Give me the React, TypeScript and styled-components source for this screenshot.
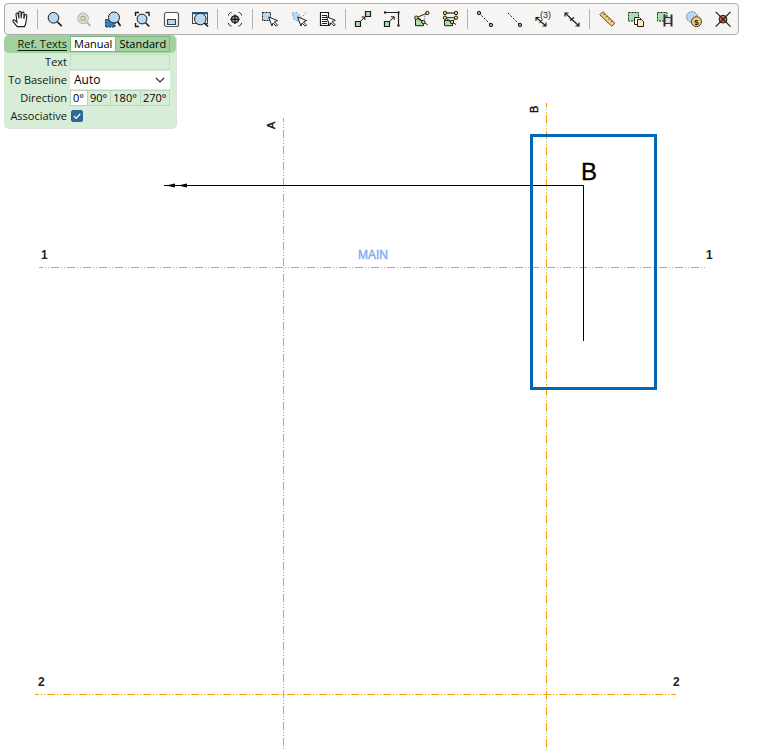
import React, { useState } from "react";
import styled, { createGlobalStyle } from "styled-components";

const GlobalStyle = createGlobalStyle`
  body {
    margin: 0;
    background: #fff;
  }
`;

const Page = styled.main`
  position: relative;
  display: flex;
  flex-direction: column;
  align-items: flex-start;
  min-height: 100vh;
  box-sizing: border-box;
  padding: 3px 4px 0;
  font-family: "Open Sans", "Noto Sans", sans-serif;
  font-size: 11px;
  color: #000;
`;

const Drawing = styled.svg`
  position: absolute;
  inset: 0;
  width: 100%;
  height: 100%;
  font-family: "Liberation Sans", Arial, sans-serif;
`;

const Toolbar = styled.div`
  position: relative;
  display: flex;
  align-items: center;
  padding-right: 1px;
  border: 1px solid #acacac;
  border-radius: 4px;
  background: #f6f5f4;
`;

const ToolButton = styled.button`
  display: flex;
  align-items: center;
  justify-content: center;
  width: 29px;
  height: 30px;
  padding: 0;
  border: 0;
  background: none;
  &:hover {
    background: #e4e9ee;
  }
`;

const Separator = styled.span`
  width: 1px;
  height: 20px;
  margin: 0 2px 0 3px;
  background: #b4b4b4;
`;

const Panel = styled.form`
  position: relative;
  display: flex;
  flex-direction: column;
  box-sizing: border-box;
  width: 173px;
  padding-bottom: 3px;
  border-radius: 5px;
  border-right: 1px solid #dde3dd;
  border-bottom: 1px solid #dde3dd;
  background: #d8edd8;
`;

const Row = styled.div<{ $header?: boolean }>`
  display: grid;
  grid-template-columns: 63px 100px;
  column-gap: 3px;
  align-items: center;
  height: 18px;
  border-radius: 5px;
  background: ${(p) => (p.$header ? "#a0d19f" : "transparent")};
`;

const Label = styled.label<{ $underlined?: boolean }>`
  text-align: right;
  line-height: 16px;
  white-space: nowrap;
  color: #10200f;
  text-decoration: ${(p) => (p.$underlined ? "underline" : "none")};
  text-underline-offset: 2px;
`;

const Options = styled.div`
  display: flex;
`;

const Option = styled.button<{ $active: boolean; $strong?: boolean }>`
  height: 16px;
  padding: ${(p) => (p.$strong ? "0 3px" : "0 3px 0 2px")};
  border: 1px solid ${(p) => (p.$strong ? "#7dbb7c" : "#b9d8b9")};
  border-left-width: ${(p) => (p.$active ? 1 : 0)}px;
  background: ${(p) => (p.$active ? "#fff" : "transparent")};
  font: inherit;
  line-height: 14px;
  color: #000;
`;

const TextBox = styled.input`
  box-sizing: border-box;
  width: 100%;
  height: 16px;
  padding: 0 3px;
  border: 1px solid #c3dfc3;
  background: transparent;
  font: inherit;
`;

const SelectBox = styled.div`
  position: relative;
  display: flex;
  & > svg {
    position: absolute;
    right: 5px;
    top: 6px;
    pointer-events: none;
  }
`;

const Select = styled.select`
  appearance: none;
  width: 100%;
  height: 18px;
  padding: 0 4px;
  border: 0;
  background: #fff;
  font: inherit;
  font-size: 12px;
  line-height: 18px;
  color: #000;
`;

const CheckBox = styled.span`
  position: relative;
  display: flex;
  & > svg {
    position: absolute;
    left: 1px;
    top: 0;
    pointer-events: none;
  }
`;

const Check = styled.input`
  appearance: none;
  width: 12px;
  height: 12px;
  margin: 0 0 0 1px;
  border: 1px solid #2a6496;
  border-radius: 2px;
  background: #fff;
  &:checked {
    background: #2f6a9c;
  }
  &:not(:checked) + svg {
    display: none;
  }
`;

const INK = "#1d1d1d";
const BLUE = "#b9d9f2";
const GREEN = "#a6dfb0";
const YELLOW = "#f6d25c";

const Pointer = ({ x, y }: { x: number; y: number }) => (
  <path
    transform={`translate(${x} ${y})`}
    d="M0 0 8.8 3.6 5.6 4.9 8.8 8.1 7.6 9.3 4.4 6 3.2 9Z"
    fill="#fff"
    stroke={INK}
    strokeWidth="1"
  />
);

const Handle = ({ d }: { d: string }) => <path d={d} stroke={INK} strokeWidth="1.7" />;

const Node = ({ x, y, fill = YELLOW, r = 1.7 }: { x: number; y: number; fill?: string; r?: number }) => (
  <circle cx={x} cy={y} r={r} fill={fill} stroke={INK} />
);

const icons: Record<string, React.ReactNode> = {
  Pan: (
    <path
      d="M10.2 19.6 6.2 14.9c-1-1.4.6-2.6 1.8-1.5l2 1.9L9 7.4c-.2-1.6 1.9-1.9 2.2-.3l.7 4.4-.2-6.1c0-1.6 2.3-1.6 2.3 0l.2 5.8.6-5.2c.2-1.5 2.3-1.2 2.2.3l-.2 5.5.9-3.4c.4-1.4 2.3-1 2.1.5l-.8 6.2c-.2 1.8-.7 3-1.6 4.5z"
      fill="#fff"
      stroke={INK}
      strokeWidth="1.1"
    />
  ),
  Zoom: (
    <>
      <Handle d="m15 14.5 4.7 4.7" />
      <circle cx="11.5" cy="10.8" r="5.3" fill={BLUE} stroke={INK} />
    </>
  ),
  "Zoom previous": (
    <>
      <path d="m15.5 15 4 4" stroke="#b4b4b4" strokeWidth="1.8" />
      <circle cx="12" cy="11.3" r="5.4" fill="#e6eae2" stroke="#b4b4b4" />
      <path d="M10 9.3h4v4h-4z" fill="#cfe6bd" stroke="#98a68e" />
      <path d="M8.5 7.8h7v7h-7z" stroke="#c4cdbe" strokeWidth=".7" />
    </>
  ),
  "Zoom window": (
    <>
      <path d="M5.5 12.5h9.5v7.5H5.5z" fill="#3f7dae" stroke="#14344e" strokeDasharray="2 1" />
      <Handle d="m17.5 14.5 3 4.5" />
      <circle cx="14" cy="10.5" r="5.5" fill={BLUE} stroke={INK} />
    </>
  ),
  "Zoom extents": (
    <>
      <path d="M6.5 9V5.5H10M16.5 5.5H20V9M6.5 16v3.5H10" stroke={INK} strokeWidth="1.4" />
      <Handle d="m16.3 15.5 4 4" />
      <circle cx="13" cy="12" r="4.9" fill={BLUE} stroke={INK} />
    </>
  ),
  Overview: (
    <>
      <rect x="6.5" y="5.5" width="14" height="14" rx="2" fill="#fff" stroke="#555" strokeWidth="1.2" />
      <path d="M9.5 12.5h8v5h-8z" fill={BLUE} stroke="#24455f" strokeWidth="1.2" />
    </>
  ),
  "Zoom view": (
    <>
      <rect x="5.5" y="5.5" width="15" height="11" fill="#fff" stroke="#444" />
      <path d="M5 6.3h16" stroke="#1d5f96" strokeWidth="2.2" />
      <Handle d="m17.3 15.8 3.7 3.7" />
      <circle cx="13.3" cy="12" r="5.8" fill={BLUE} stroke={INK} />
    </>
  ),
  Centre: (
    <>
      <path d="M6.5 8.5v-1l2-2h1M16.5 5.5h1l2 2v1M6.5 16v1l2 2h1M19.5 16v1l-2 2h-1" stroke={INK} />
      <circle cx="13" cy="12.3" r="3.5" fill="#8fa3b3" stroke={INK} strokeWidth="1.2" />
      <path d="M13 7.5v9.6M8.2 12.3h9.6" stroke={INK} strokeWidth="1.3" />
    </>
  ),
  "Select area": (
    <>
      <path d="M5.5 5.5h8v8h-8z" fill={BLUE} stroke={INK} strokeDasharray="2 1" />
      <Pointer x={11.7} y={10} />
    </>
  ),
  "Select polygon": (
    <>
      <path d="m6 6 5-.5 4 4-2 5-5-2z" fill={BLUE} stroke="#7ea6c4" strokeDasharray="2 1.5" />
      <path d="m20 5.5-4 5" stroke="#888" strokeDasharray="1.5 1.5" />
      <Pointer x={11.7} y={10} />
    </>
  ),
  "Select from list": (
    <>
      <path d="M5.5 5.5h8v13h-8z" fill="#fff" stroke={INK} strokeWidth="1.2" />
      <path d="M7 8.5h5M7 10.5h5M7 12.5h5M7 14.5h5M7 16.5h5" stroke={INK} />
      <Pointer x={11.5} y={9.7} />
    </>
  ),
  Move: (
    <>
      <path d="M5.5 14.5h5v5h-5zM15.5 4.5h5v5h-5z" fill={GREEN} stroke={INK} strokeWidth="1.2" />
      <path d="m10.8 14 4-4M11.6 10h3.2v3.2" stroke={INK} />
    </>
  ),
  "Move to line": (
    <>
      <path d="M5.5 14.5h5v5h-5z" fill={GREEN} stroke={INK} strokeWidth="1.2" />
      <path d="m10.8 14 4.4-4.2M11.8 9.8h3.4V13" stroke={INK} />
      <path d="M6 5.5h13.5v13" stroke={INK} strokeWidth="1.2" />
      <path d="M5.5 4.8h1.4v1.4H5.5zM18.8 4.8h1.4v1.4h-1.4zM18.8 17.8h1.4v1.4h-1.4z" fill="#d8e25a" stroke={INK} />
    </>
  ),
  "Rotate copy": (
    <>
      <path d="M7.5 11.5h4l4 4v3.2h-8z" fill={GREEN} stroke={INK} />
      <path d="M19 6.2 8.3 10.7l7 4.3 4.4 2.9" stroke={INK} />
      <path d="m17 8.5-.8 5" stroke="#5f8090" strokeDasharray="1.5 1" />
      <Node x={19.3} y={6} />
      <Node x={8.3} y={10.7} />
      <Node x={15.3} y={15} />
    </>
  ),
  "Mirror copy": (
    <>
      <path d="M7.5 13.5h4l4 2.5v2.7h-8z" fill={GREEN} stroke={INK} />
      <path d="M8 6h11" stroke="#555" strokeWidth="1.6" />
      <path d="M19 10.7H8l7 4.3 4 2.5M19 10.7 15 15" stroke={INK} />
      <Node x={8} y={6} />
      <Node x={19} y={6} />
      <Node x={8} y={10.7} />
      <Node x={19} y={10.7} />
      <Node x={15} y={15} />
    </>
  ),
  "Line between points": (
    <>
      <path d="M7 6 19 18" stroke={INK} strokeDasharray="2 1.5" />
      <Node x={7} y={6} fill="#7fa9cf" />
      <Node x={19} y={18} fill="#7fa9cf" />
    </>
  ),
  "Line to point": (
    <>
      <path d="M7 6 19 18" stroke={INK} strokeDasharray="2 1.5" />
      <Node x={19} y={18} fill="#7fa9cf" />
    </>
  ),
  "Measure chain": (
    <>
      <path d="m6 10.5 10 8.5M6 14v-3.5h3.5M12.5 19H16v-3.5M9.5 16l2.5-3" stroke={INK} strokeWidth="1.1" />
      <text x="10" y="11" fontSize="9" fontFamily="Liberation Sans, sans-serif" fill={INK}>
        (3)
      </text>
    </>
  ),
  "Measure distance": (
    <path
      d="m6 6 14 13M6 9.5V6h3.5M16.5 19H20v-3.5M11 13.5l4-3"
      stroke={INK}
      strokeWidth="1.2"
    />
  ),
  Ruler: (
    <>
      <path d="m8.8 4.7 12 11.5-3 3-12-11.5z" fill="#f5cc80" stroke="#5f4a26" />
      <path d="m10.7 6.7-1.3 1.4M13.2 9l-1.3 1.4M15.7 11.4l-1.3 1.4M18.2 13.8l-1.3 1.4" stroke="#5f4a26" />
    </>
  ),
  "Copy pages": (
    <>
      <path d="M5.5 5.5h10v8.5h-10z" fill={GREEN} stroke={INK} strokeDasharray="2 1" />
      <path d="M11.5 10.5h5l1.5 1.5v5.5h-6.5z" fill="#fff" stroke={INK} />
      <path d="M14.5 12.5h4l2 2v5h-6z" fill="#ffebb5" stroke={INK} />
    </>
  ),
  "Copy to view": (
    <>
      <path d="M5.5 5.5h9.5v8.5H5.5z" fill={GREEN} stroke={INK} strokeDasharray="2 1" />
      <path d="M12.5 10h7v6.5h-7z" fill="#dbe0e3" />
      <path d="M12.5 7.5v12M19.5 7.5v12" stroke="#333" strokeWidth="2" />
      <path d="M12.5 10.5h7M12.5 16.5h7" stroke="#333" />
    </>
  ),
  Cost: (
    <>
      <circle cx="11" cy="10" r="5.4" fill={BLUE} stroke="#53799a" strokeDasharray="2 1" />
      <circle cx="15.5" cy="14.7" r="5" fill="#f8cb75" stroke="#4c3d20" />
      <text x="15.5" y="17.7" fontSize="8" fontWeight="700" textAnchor="middle" fontFamily="Liberation Sans, sans-serif" fill={INK}>
        $
      </text>
    </>
  ),
  "Delete point": (
    <>
      <circle cx="13" cy="12.2" r="3.9" fill="#d9694a" stroke={INK} />
      <path d="m5.7 4.9 14.8 14.8M20.5 4.9 5.7 19.7" stroke={INK} strokeWidth="1.2" />
    </>
  ),
};

const toolGroups: string[][] = [
  ["Pan"],
  ["Zoom", "Zoom previous", "Zoom window", "Zoom extents", "Overview", "Zoom view"],
  ["Centre"],
  ["Select area", "Select polygon", "Select from list"],
  ["Move", "Move to line", "Rotate copy", "Mirror copy"],
  ["Line between points", "Line to point", "Measure chain", "Measure distance"],
  ["Ruler", "Copy pages", "Copy to view", "Cost", "Delete point"],
];

const axisDash = "4 2 1 2 1 2 4 0";

const GridDrawing = () => (
  <Drawing role="img" aria-label="Grid plan">
    <g stroke="#f9a100" strokeDasharray={axisDash} shapeRendering="crispEdges">
      <path d="M39 267.5H705" />
      <path d="M35 694.5H676" />
      <path d="M283.5 118V749" />
      <path d="M546.5 103V750" />
    </g>
    <g fill="none" stroke="#000" shapeRendering="crispEdges">
      <path d="M164 185.5H583.5V341" />
    </g>
    <path d="m166 185.5 9-2v4zM178 185.5l9-2v4z" fill="#000" />
    <rect x="531.5" y="135.5" width="124" height="253" fill="none" stroke="#0068b5" strokeWidth="3" />
    <g fontSize="12" fontWeight="700" fill="#222">
      <text x="41" y="259">1</text>
      <text x="706" y="259">1</text>
      <text x="38" y="686">2</text>
      <text x="673" y="686">2</text>
    </g>
    <g fontSize="11" fill="#111" stroke="#111" strokeWidth=".4">
      <text transform="translate(275 129) rotate(-90)">A</text>
      <text transform="translate(538 113) rotate(-90)">B</text>
    </g>
    <text x="358" y="259" fontSize="12" fill="#82abf3" stroke="#82abf3" strokeWidth=".4">
      MAIN
    </text>
    <text x="581" y="180" fontSize="24" fill="#000" stroke="#000" strokeWidth=".3">
      B
    </text>
  </Drawing>
);

const directions = ["0°", "90°", "180°", "270°"];
const modes = ["Manual", "Standard"];

export default function App() {
  const [mode, setMode] = useState("Manual");
  const [direction, setDirection] = useState("0°");

  return (
    <>
      <GlobalStyle />
      <Page>
        <GridDrawing />
        <Toolbar role="toolbar" aria-label="View tools">
          {toolGroups.map((group, i) => (
            <React.Fragment key={group[0]}>
              {i > 0 && <Separator />}
              {group.map((name) => (
                <ToolButton key={name} type="button" aria-label={name}>
                  <svg width="25" height="24" viewBox="0 0 25 24" fill="none" aria-hidden="true">
                    {icons[name]}
                  </svg>
                </ToolButton>
              ))}
            </React.Fragment>
          ))}
        </Toolbar>
        <Panel>
          <Row $header>
            <Label as="span" id="mode-label" $underlined>
              Ref. Texts
            </Label>
            <Options role="group" aria-labelledby="mode-label">
              {modes.map((m) => (
                <Option key={m} type="button" $strong $active={m === mode} onClick={() => setMode(m)}>
                  {m}
                </Option>
              ))}
            </Options>
          </Row>
          <Row>
            <Label htmlFor="text">Text</Label>
            <TextBox id="text" type="text" />
          </Row>
          <Row>
            <Label htmlFor="baseline">To Baseline</Label>
            <SelectBox>
              <Select id="baseline" defaultValue="Auto">
                <option>Auto</option>
              </Select>
              <svg width="10" height="7" viewBox="0 0 10 7" fill="none" aria-hidden="true">
                <path d="m1 1 4 4 4-4" stroke="#333" strokeWidth="1.2" />
              </svg>
            </SelectBox>
          </Row>
          <Row>
            <Label as="span" id="direction-label">
              Direction
            </Label>
            <Options role="group" aria-labelledby="direction-label">
              {directions.map((d) => (
                <Option key={d} type="button" $active={d === direction} onClick={() => setDirection(d)}>
                  {d}
                </Option>
              ))}
            </Options>
          </Row>
          <Row>
            <Label htmlFor="associative">Associative</Label>
            <CheckBox>
              <Check id="associative" type="checkbox" defaultChecked />
              <svg width="12" height="12" viewBox="0 0 12 12" fill="none" aria-hidden="true">
                <path d="m3 6 2.2 2.4L9.2 4" stroke="#fff" strokeWidth="1.3" />
              </svg>
            </CheckBox>
          </Row>
        </Panel>
      </Page>
    </>
  );
}
